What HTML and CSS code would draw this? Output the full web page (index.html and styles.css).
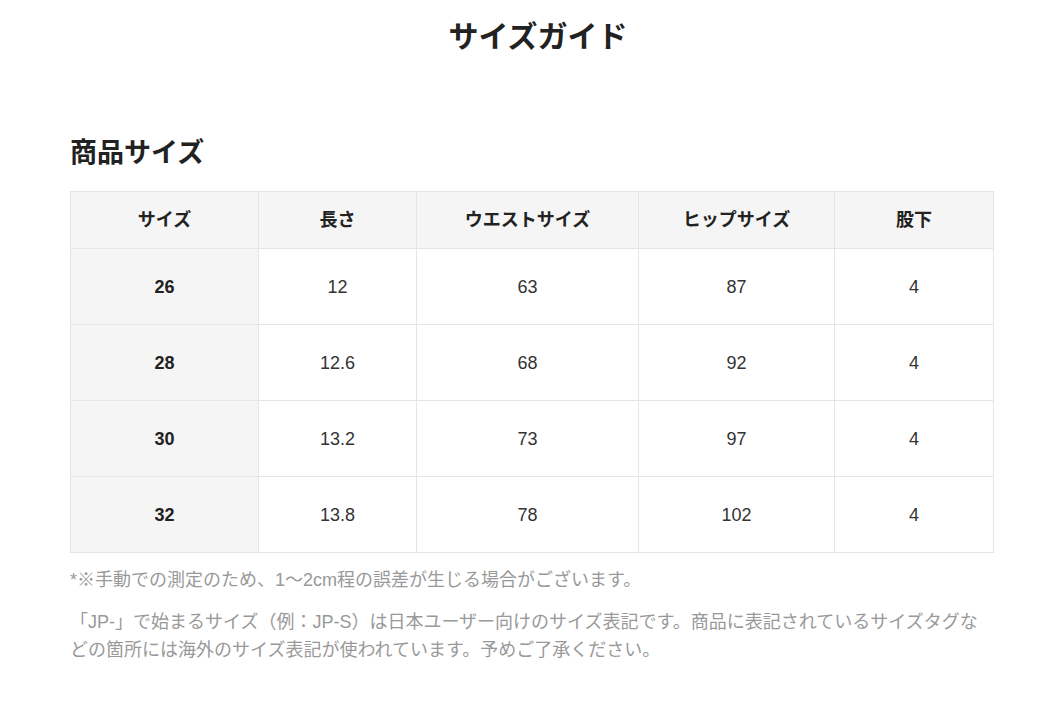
FILE: index.html
```html
<!DOCTYPE html>
<html lang="ja">
<head>
<meta charset="utf-8">
<link rel="stylesheet" href="styles.css">
</head>
<body>
<div class="page">
  <h1 class="title">サイズガイド</h1>
  <h2 class="section">商品サイズ</h2>
  <table class="size-table">
    <colgroup>
      <col class="c1"><col class="c2"><col class="c3"><col class="c4"><col class="c5">
    </colgroup>
    <thead>
      <tr><th>サイズ</th><th>長さ</th><th>ウエストサイズ</th><th>ヒップサイズ</th><th>股下</th></tr>
    </thead>
    <tbody>
      <tr><th>26</th><td>12</td><td>63</td><td>87</td><td>4</td></tr>
      <tr><th>28</th><td>12.6</td><td>68</td><td>92</td><td>4</td></tr>
      <tr><th>30</th><td>13.2</td><td>73</td><td>97</td><td>4</td></tr>
      <tr><th>32</th><td>13.8</td><td>78</td><td>102</td><td>4</td></tr>
    </tbody>
  </table>
  <p class="note first">*※手動での測定のため、1〜2cm程の誤差が生じる場合がございます。</p>
  <p class="note">「JP-」で始まるサイズ（例：JP-S）は日本ユーザー向けのサイズ表記です。商品に表記されているサイズタグなどの箇所には海外のサイズ表記が使われています。予めご了承ください。</p>
</div>
</body>
</html>
```
FILE: styles.css
```css
html, body {
  margin: 0;
  padding: 0;
  background: #fff;
}
body {
  font-family: "Liberation Sans", "Noto Sans CJK JP", sans-serif;
  color: #333;
}
.page {
  width: 923px;
  margin-left: 70px;
  padding-top: 17px;
}
.title {
  margin: 0;
  font-size: 30px;
  line-height: 40px;
  font-weight: 700;
  color: #222;
  text-align: center;
  padding-left: 13px;
}
.section {
  margin: 78px 0 0;
  font-size: 27px;
  line-height: 36px;
  font-weight: 700;
  color: #222;
}
.size-table {
  margin-top: 20px;
  width: 923px;
  table-layout: fixed;
  border-collapse: collapse;
  font-size: 18px;
  color: #333;
}
.c1 { width: 188px; }
.c2 { width: 158px; }
.c3 { width: 222px; }
.c4 { width: 196px; }
.c5 { width: 159px; }
.size-table th,
.size-table td {
  border: 1px solid #e5e5e5;
  text-align: center;
  padding: 0;
  line-height: 24px;
}
.size-table thead th {
  height: 56px;
  background: #f5f5f5;
  font-weight: 700;
  color: #222;
}
.size-table tbody tr {
  height: 76px;
}
.size-table tbody th {
  background: #f5f5f5;
  font-weight: 700;
  color: #222;
}
.size-table tbody td {
  font-weight: 400;
}
.note {
  margin: 14px 0 0;
  font-size: 18px;
  line-height: 28px;
  color: #999;
}
.note.first {
  margin-top: 13px;
}
```
